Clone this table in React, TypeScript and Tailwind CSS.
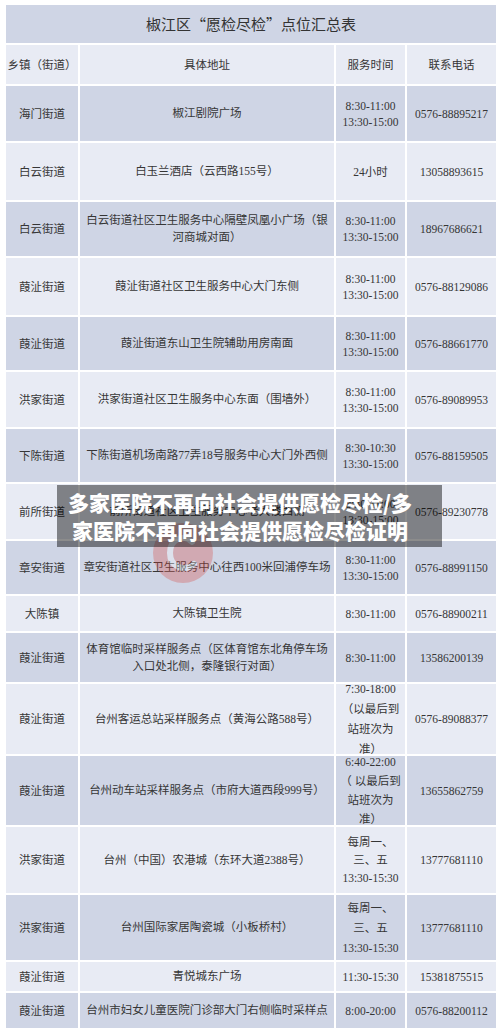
import React from 'react';

type Row = {
  t: string;
  a: string[];
  s: string[];
  p: string;
  h: string;
  dark: boolean;
  sl?: string;
};

const S2 = ['8:30-11:00', '13:30-15:00'];

const rows: Row[] = [
  { t: '海门街道', a: ['椒江剧院广场'], s: S2, p: '0576-88895217', h: 'h-[55px]', dark: true },
  { t: '白云街道', a: ['白玉兰酒店（云西路155号）'], s: ['24小时'], p: '13058893615', h: 'h-[57px]', dark: false },
  { t: '白云街道', a: ['白云街道社区卫生服务中心隔壁凤凰小广场（银', '河商城对面）'], s: S2, p: '18967686621', h: 'h-[54px]', dark: true },
  { t: '葭沚街道', a: ['葭沚街道社区卫生服务中心大门东侧'], s: S2, p: '0576-88129086', h: 'h-[57px]', dark: false },
  { t: '葭沚街道', a: ['葭沚街道东山卫生院辅助用房南面'], s: S2, p: '0576-88661770', h: 'h-[53px]', dark: true },
  { t: '洪家街道', a: ['洪家街道社区卫生服务中心东面（围墙外）'], s: S2, p: '0576-89089953', h: 'h-[55px]', dark: false },
  { t: '下陈街道', a: ['下陈街道机场南路77弄18号服务中心大门外西侧'], s: ['8:30-10:30', '13:30-15:00'], p: '0576-88159505', h: 'h-[53px]', dark: true },
  { t: '前所街道', a: ['前所街道社区卫生服务中心老大楼西侧'], s: S2, p: '0576-89230778', h: 'h-[55px]', dark: false },
  { t: '章安街道', a: ['章安街道社区卫生服务中心往西100米回浦停车场'], s: S2, p: '0576-88991150', h: 'h-[53px]', dark: true },
  { t: '大陈镇', a: ['大陈镇卫生院'], s: ['8:30-11:00'], p: '0576-88900211', h: 'h-[35px]', dark: false },
  { t: '葭沚街道', a: ['体育馆临时采样服务点（区体育馆东北角停车场', '入口处北侧，泰隆银行对面）'], s: ['8:30-11:00'], p: '13586200139', h: 'h-[49px]', dark: true },
  { t: '葭沚街道', a: ['台州客运总站采样服务点（黄海公路588号）'], s: ['7:30-18:00', '（以最后到', '站班次为', '准）'], p: '0576-89088377', h: 'h-[70px]', dark: false, sl: 'leading-[20px]' },
  { t: '葭沚街道', a: ['台州动车站采样服务点（市府大道西段999号）'], s: ['6:40-22:00', '（ 以最后到', '站班次为', '准）'], p: '13655862759', h: 'h-[69px]', dark: true, sl: 'leading-[19px]' },
  { t: '洪家街道', a: ['台州（中国）农港城（东环大道2388号）'], s: ['每周一、', '三、五', '13:30-15:30'], p: '13777681110', h: 'h-[66px]', dark: false, sl: 'leading-[18px]' },
  { t: '洪家街道', a: ['台州国际家居陶瓷城（小板桥村）'], s: ['每周一、', '三、五', '13:30-15:30'], p: '13777681110', h: 'h-[65px]', dark: true, sl: 'leading-[20px]' },
  { t: '葭沚街道', a: ['青悦城东广场'], s: ['11:30-15:30'], p: '15381875515', h: 'h-[29px]', dark: false },
  { t: '葭沚街道', a: ['台州市妇女儿童医院门诊部大门右侧临时采样点'], s: ['8:00-20:00'], p: '0576-88200112', h: 'h-[35px]', dark: true },
];

const serif = { fontFamily: '"Liberation Serif", "Noto Sans CJK SC", serif' };

function Cell({ w, bg, h, children, lead }: { w: string; bg: string; h: string; children: React.ReactNode; lead?: string }) {
  return (
    <div className={`${w} ${h} ${bg} flex items-center justify-center overflow-hidden text-center text-[11.5px] text-[#363636] ${lead ?? 'leading-[16px]'}`}>
      <div>{children}</div>
    </div>
  );
}

function Lines({ lines }: { lines: string[] }) {
  return (
    <>
      {lines.map((l, i) => (
        <div key={i} className="whitespace-nowrap">{l}</div>
      ))}
    </>
  );
}

export default function App() {
  return (
    <div className="relative w-[500px] h-[1034px] bg-white overflow-hidden pt-[5px] pl-[6px]" style={serif}>
      <div className="w-[490px] flex flex-col gap-[2px]">
        <div
          className="h-[38px] bg-[#cfd5e5] flex items-center justify-center text-[15px] text-[#333]"
          style={{ fontFamily: '"Noto Sans CJK SC", sans-serif' }}
        >
          椒江区“愿检尽检”点位汇总表
        </div>
        <div className="flex gap-[2px]">
          <Cell w="w-[72px]" h="h-[39px]" bg="bg-[#e8ebf4]">乡镇（街道）</Cell>
          <Cell w="w-[254px]" h="h-[39px]" bg="bg-[#e8ebf4]">具体地址</Cell>
          <Cell w="w-[69px]" h="h-[39px]" bg="bg-[#e8ebf4]">服务时间</Cell>
          <Cell w="w-[89px]" h="h-[39px]" bg="bg-[#e8ebf4]">联系电话</Cell>
        </div>
        {rows.map((r, i) => {
          const bg = r.dark ? 'bg-[#cfd5e5]' : 'bg-[#e8ebf4]';
          return (
            <div key={i} className="flex gap-[2px]">
              <Cell w="w-[72px]" h={r.h} bg={bg}>{r.t}</Cell>
              <Cell w="w-[254px]" h={r.h} bg={bg} lead="leading-[17px]"><Lines lines={r.a} /></Cell>
              <Cell w="w-[69px]" h={r.h} bg={bg} lead={r.sl}><Lines lines={r.s} /></Cell>
              <Cell w="w-[89px]" h={r.h} bg={bg}>{r.p}</Cell>
            </div>
          );
        })}
      </div>

      <svg className="absolute left-[152px] top-[520px] opacity-30" width="62" height="66" viewBox="0 0 62 66">
        <circle cx="31" cy="33" r="30" fill="#d8463f" />
        <path d="M40 22 C32 14 18 18 18 33 C18 48 34 52 42 44" stroke="#fff" strokeWidth="6" fill="none" strokeLinecap="round" />
      </svg>

      <div
        className="absolute left-[57px] top-[485px] w-[385px] h-[62px] bg-black/45 pr-[19px] pt-[3px] text-center text-white text-[21px] font-black leading-[28px]"
        style={{ fontFamily: '"Noto Sans CJK SC", sans-serif' }}
      >
        <div className="whitespace-nowrap">多家医院不再向社会提供愿检尽检/多</div>
        <div className="whitespace-nowrap">家医院不再向社会提供愿检尽检证明</div>
      </div>
    </div>
  );
}
